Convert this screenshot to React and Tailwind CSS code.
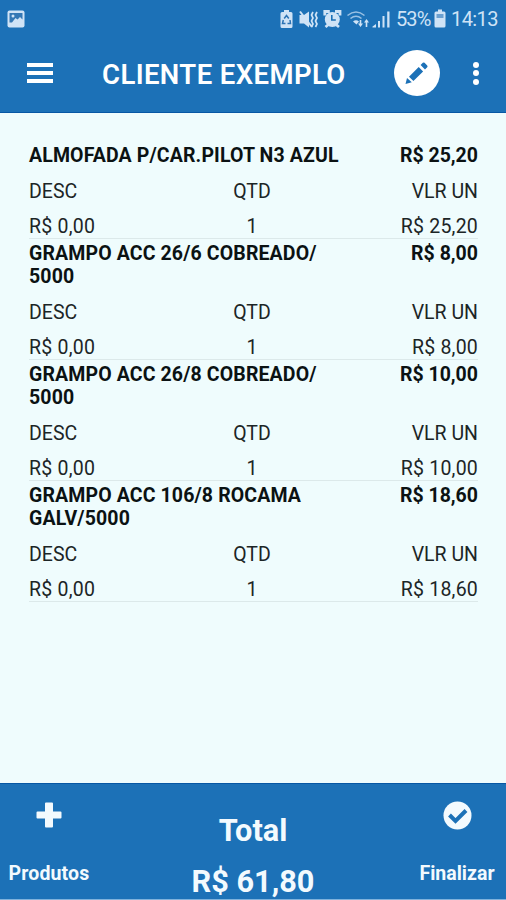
const items = [
  { lines: ["ALMOFADA P/CAR.PILOT N3 AZUL"], price: "R$ 25,20" },
  { lines: ["GRAMPO ACC 26/6 COBREADO/", "5000"], price: "R$ 8,00" },
  { lines: ["GRAMPO ACC 26/8 COBREADO/", "5000"], price: "R$ 10,00" },
  { lines: ["GRAMPO ACC 106/8 ROCAMA", "GALV/5000"], price: "R$ 18,60" },
];

function StatusBar() {
  return (
    <div className="flex h-[37px] items-center justify-between pl-[7px] pr-[8px] text-[#cfe3f6]">
      <svg className="h-[18px] w-[18px]" viewBox="0 0 18 18">
        <rect x="0.5" y="0.5" width="17" height="17" rx="2" fill="currentColor" />
        <path d="M2.500 3h13v6.500l-2.500-2.500-2.500 2.500-2-1.500-3.500 4.500h-2.500z" fill="#3478b5" />
        <circle cx="6" cy="6" r="1.500" fill="currentColor" />
      </svg>
      <div className="flex items-center">
        <svg className="h-[20px] w-[110px]" viewBox="280 8 110 20" fill="currentColor">
          <path d="M284 9h5v2h2q1.500 0 1.500 1.500v13q0 1.500-1.500 1.500h-9q-1.500 0-1.500-1.500v-13q0-1.500 1.500-1.500h2z" />
          <path d="M284.200 17.500l2.300-3 2.300 3M290 19l.5 3.500h-3M285.500 22.500h-3l.8-3.500" fill="none" stroke="#2c73b4" strokeWidth="1.500" />
          <path d="M299.500 14h4.500l5-3.500v16l-5-4h-4.500z" />
          <path d="M300 10.500l12 15.500" stroke="currentColor" strokeWidth="2" />
          <path d="M313 11l-1.500 3 1.500 3-1.500 3 1.500 3-1.500 3M317 11l-1.500 3 1.500 3-1.500 3 1.500 3-1.500 3" fill="none" stroke="currentColor" strokeWidth="1.700" />
          <circle cx="332.300" cy="18.500" r="7.500" />
          <path d="M324.800 14.500v-4h5M335 10.500h5v4M325.500 26l3-2.500M339 26l-3-2.500" fill="none" stroke="currentColor" strokeWidth="2.800" />
          <path d="M331.800 14v5h4" fill="none" stroke="#1c71b7" strokeWidth="1.600" />
          <path d="M347.500 14.500q8.500-7 17 0M350.500 17.500q5.500-4.500 11 0" fill="none" stroke="currentColor" strokeWidth="1.600" opacity="0.7" />
          <path d="M353 20.500q3-2.500 6 0l-2.500 3z" />
          <path d="M360.500 19v5M366.500 20v6" stroke="currentColor" strokeWidth="1.600" />
          <path d="M358 22.500h5l-2.500 3.500zM364 21.500h5l-2.500-3.500z" />
          <path d="M372.500 26.500v-1l3.500-2.500v3.500zM378 20h2v6.500h-2zM382.500 15h2v11.500h-2zM387.200 10.500h2.300v16h-2.300z" />
        </svg>
        <span className="ml-[6px] w-[35px] whitespace-nowrap text-[20px] leading-[24px] tracking-[-0.9px]">53%</span>
        <svg className="ml-[3px] h-[19px] w-[12px]" viewBox="0 0 12 19">
          <path d="M4 .5h4v2h2q1.500 0 1.500 1.500v13q0 1.500-1.500 1.500h-8q-1.500 0-1.500-1.500v-13q0-1.500 1.500-1.500h2z" fill="currentColor" />
          <path d="M2.500 5h7v4h-7z" fill="#6ba0d0" />
        </svg>
        <span className="ml-[5px] w-[47px] whitespace-nowrap text-[20px] leading-[24px] tracking-[-0.6px]">14:13</span>
      </div>
    </div>
  );
}

function Header() {
  return (
    <div className="flex h-[75px] items-center pl-[27px]">
      <div className="mb-[4px] flex w-[26px] flex-col gap-[4px]">
        <i className="h-[4px] bg-white" />
        <i className="h-[4px] bg-white" />
        <i className="h-[4px] bg-white" />
      </div>
      <h1 className="ml-[49px] mt-[1px] w-[292px] whitespace-nowrap text-[27.500px] font-semibold leading-[32px] tracking-[0.4px]">CLIENTE EXEMPLO</h1>
      <div className="mb-[3px] flex h-[46px] w-[46px] shrink-0 items-center justify-center rounded-full bg-white">
        <svg className="h-[24px] w-[24px]" viewBox="0 0 24 24" fill="#1c71b7">
          <path d="M.5 23l1.500-6 4.800 4.300zM4 15.700l9.700-9.700 4.400 4.400-9.700 9.700zM15.600 4l2.200-2.200q.9-.8 1.800 0l2.600 2.600q.8.9 0 1.800l-2.200 2.200z" />
        </svg>
      </div>
      <div className="mb-[3px] ml-[33px] flex flex-col gap-[2.500px]">
        <i className="h-[6px] w-[6px] rounded-full bg-white" />
        <i className="h-[6px] w-[6px] rounded-full bg-white" />
        <i className="h-[6px] w-[6px] rounded-full bg-white" />
      </div>
    </div>
  );
}

function Item({ lines, price }) {
  return (
    <section className="border-b border-[#dce9ea] pt-[3px]">
      <div className="flex justify-between text-[19.500px] font-bold leading-[23.500px] text-[#0b1213]">
        <div className="whitespace-nowrap tracking-[0.13px]">
          {lines.map((line) => <p key={line}>{line}</p>)}
        </div>
        <p>{price}</p>
      </div>
      <div className="mt-[6px] grid h-[35px] grid-cols-3 items-center">
        <span>DESC</span>
        <span className="pr-[3px] text-center">QTD</span>
        <span className="text-right">VLR UN</span>
      </div>
      <div className="grid h-[29px] grid-cols-3 items-center pt-[6px] tracking-[0.22px]">
        <span>R$ 0,00</span>
        <span className="pr-[3px] text-center">1</span>
        <span className="text-right">{price}</span>
      </div>
    </section>
  );
}

export default function App() {
  return (
    <div className="flex h-[900px] w-[506px] flex-col overflow-hidden bg-[#effcfd] font-['Roboto',sans-serif]">
      <header className="h-[113px] border-b border-[#0757a4] bg-[#1c71b7] text-white">
        <StatusBar />
        <Header />
      </header>
      <main className="flex-1 pl-[29px] pr-[28px] pt-[28px] text-[19.500px] leading-[23px] text-[#1c2526]">
        {items.map((item) => <Item key={item.lines[0]} {...item} />)}
      </main>
      <footer className="flex h-[117px] justify-between border-b border-t border-b-[#7fb2dc] border-t-[#0757a4] bg-[#1c71b7] font-bold text-[#f3fafe]">
        <div className="flex w-[98px] flex-col items-center">
          <svg className="mt-[18px] h-[26px] w-[26px]" viewBox="0 0 26 26" fill="currentColor">
            <path d="M10 .5h6q1 0 1 1v8h7.500q1 0 1 1v5q0 1-1 1h-7.500v8q0 1-1 1h-6q-1 0-1-1v-8h-7.500q-1 0-1-1v-5q0-1 1-1h7.500v-8q0-1 1-1z" />
          </svg>
          <span className="mt-[34px] text-[19.500px] leading-[24px] tracking-[0.15px]">Produtos</span>
        </div>
        <div className="flex flex-col items-center pt-[21px] text-[30.700px] leading-[51px]">
          <span>Total</span>
          <span>R$ 61,80</span>
        </div>
        <div className="flex w-[98px] flex-col items-center">
          <svg className="mt-[17px] h-[29px] w-[29px]" viewBox="0 0 29 29">
            <circle cx="14.500" cy="14.500" r="14" fill="currentColor" />
            <path d="M6.500 14l6 6 10.500-10.500" fill="none" stroke="#1c71b7" strokeWidth="4" />
          </svg>
          <span className="mt-[32px] text-[19.500px] leading-[24px]">Finalizar</span>
        </div>
      </footer>
    </div>
  );
}
